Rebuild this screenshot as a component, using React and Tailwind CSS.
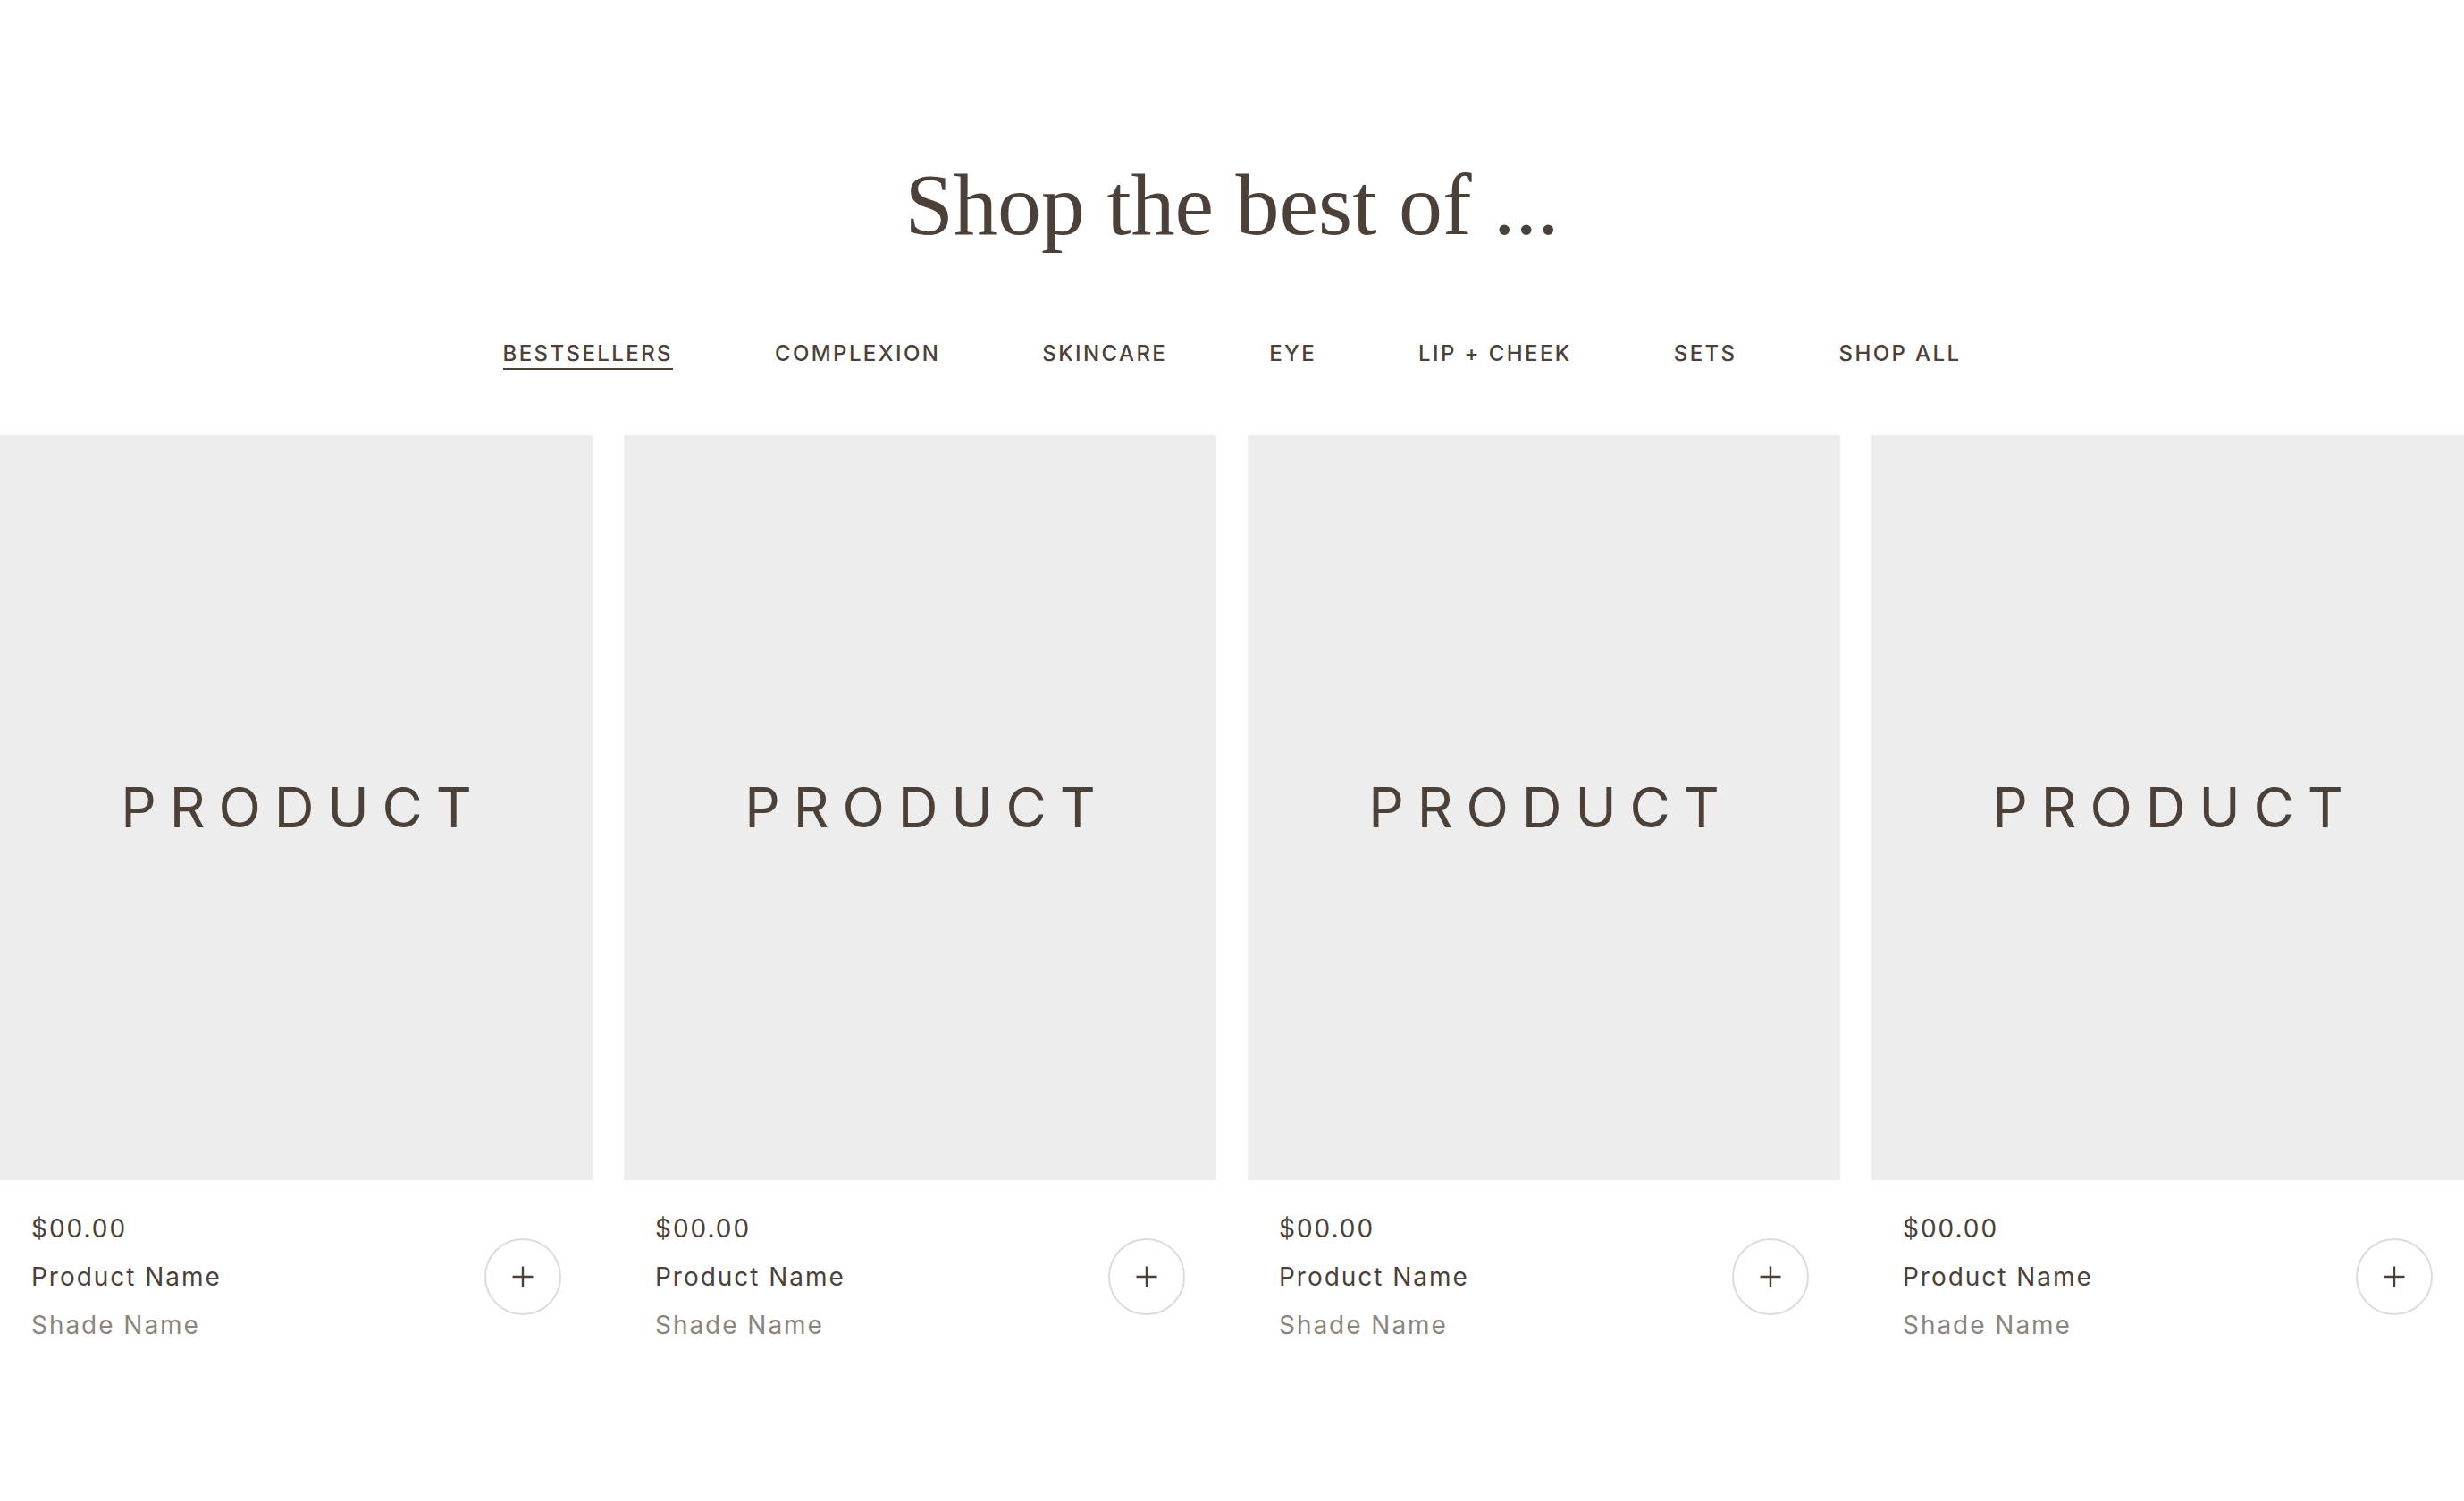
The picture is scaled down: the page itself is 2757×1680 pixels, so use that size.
import React from "react";

const tabs = [
  "BESTSELLERS",
  "COMPLEXION",
  "SKINCARE",
  "EYE",
  "LIP + CHEEK",
  "SETS",
  "SHOP ALL",
];

const products = [1, 2, 3, 4];

const PlusButton = () => (
  <button className="flex h-[86px] w-[86px] shrink-0 items-center justify-center rounded-full border-2 border-[#dedcdb] bg-white">
    <svg width="24" height="24" viewBox="0 0 24 24" fill="none">
      <path d="M12 0.5v23M0.5 12h23" stroke="#4b4139" strokeWidth="2.4" />
    </svg>
  </button>
);

const ProductCard = () => (
  <div className="flex flex-col">
    <div className="flex h-[834px] items-center justify-center bg-[#ededed]">
      <span className="pl-[0.24em] font-['Inter',sans-serif] text-[62px] leading-none tracking-[0.24em] text-[#4b4139]">
        PRODUCT
      </span>
    </div>
    <div className="flex items-center justify-between pl-[35px] pr-[35px] pt-[27px]">
      <div className="flex flex-col font-['Inter',sans-serif] text-[28px] leading-[54px] tracking-[0.07em]">
        <span className="text-[#4b4139]">$00.00</span>
        <span className="text-[#4b4139]">Product Name</span>
        <span className="text-[#8c857e]">Shade Name</span>
      </div>
      <PlusButton />
    </div>
  </div>
);

export default function App() {
  return (
    <div className="min-h-[1680px] w-full bg-white">
      <h1 className="pt-[180px] text-center font-['Liberation_Serif',serif] text-[98px] font-normal leading-none text-[#4b4139]">
        Shop the best of ...
      </h1>
      <nav className="mt-[106px] flex justify-center gap-[114px] font-['Inter',sans-serif] text-[24px] font-medium leading-[24px] tracking-[0.1em] text-[#4b4139]">
        {tabs.map((t, i) => (
          <a
            key={t}
            className={
              i === 0
                ? "border-b-2 border-[#4b4139] pb-[4px]"
                : "border-b-2 border-transparent pb-[4px]"
            }
          >
            {t}
          </a>
        ))}
      </nav>
      <div className="mt-[73px] grid grid-cols-4 gap-[35px]">
        {products.map((p) => (
          <ProductCard key={p} />
        ))}
      </div>
    </div>
  );
}
